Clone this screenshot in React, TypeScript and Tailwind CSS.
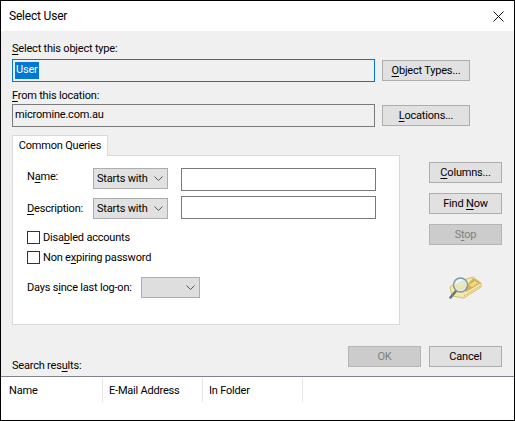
import React from "react";

function Key({ children }: { children: React.ReactNode }) {
  return <span className="underline underline-offset-2">{children}</span>;
}

function Btn({
  children,
  disabled,
  className,
}: {
  children: React.ReactNode;
  disabled?: boolean;
  className: string;
}) {
  return (
    <div
      className={
        (disabled
          ? "bg-[#cccccc] border-[#b5b5b5] text-[#7f7f7f] "
          : "bg-[#e1e1e1] border-[#adadad] text-black ") +
        "h-[21px] border flex items-center justify-center " +
        className
      }
    >
      {children}
    </div>
  );
}

function Chevron() {
  return (
    <svg width="9" height="5" viewBox="0 0 9 5" fill="none" stroke="#555555" strokeWidth="1">
      <path d="M0.5 0.5 L4.5 4.5 L8.5 0.5" />
    </svg>
  );
}

function Combo({ label, className }: { label?: string; className: string }) {
  return (
    <div className={"h-[21px] bg-[#e1e1e1] border border-[#adadad] flex items-center justify-between pl-[3px] pr-[4px] " + className}>
      <span>{label}</span>
      <Chevron />
    </div>
  );
}

function Check({ children }: { children: React.ReactNode }) {
  return (
    <div className="flex items-center h-[13px] gap-[3px]">
      <div className="w-[13px] h-[13px] bg-white border border-[#333333]" />
      <span className="pt-px">{children}</span>
    </div>
  );
}

function FinderIcon() {
  return (
    <svg width="34" height="26" viewBox="0 0 34 26">
      <path d="M1 13 L8 8 L24 3 L32 9 L32 13 L15 24 L3 22 Z" fill="#f5e9a8" stroke="#c9b45c" strokeWidth="0.8" />
      <path d="M15 15 L24 4 L32 9 L17 18 Z" fill="#d2b352" />
      <path d="M20 11 L26 7 L29 9 L23 13 Z" fill="#ecd98a" />
      <path d="M15 22 L31 12" stroke="#b49a45" strokeWidth="0.8" strokeDasharray="1.5 1" />
      <path d="M1.5 23.5 L7 17" stroke="#6f7478" strokeWidth="2.6" strokeLinecap="round" />
      <circle cx="11.5" cy="11" r="7" fill="#dfe9e2" stroke="#7f97a8" strokeWidth="1.4" />
      <path d="M5.5 12 Q11 9 17.5 11.5 A6.5 6.5 0 0 1 5.5 12 Z" fill="#ece5b0" />
      <path d="M7 9 Q9.5 5.5 13.5 6" stroke="#ffffff" strokeWidth="1.1" fill="none" />
    </svg>
  );
}

export default function App() {
  return (
    <div className="w-[515px] h-[421px] border border-black bg-[#f0f0f0] flex flex-col overflow-hidden whitespace-nowrap text-[11px] tracking-[-0.2px] leading-[16px] text-black font-['Roboto',sans-serif]">
      {/* Title bar */}
      <div className="h-[30px] bg-white flex items-center justify-between pl-[8px] pr-[10px] shrink-0">
        <span className="text-[12px]">Select User</span>
        <svg width="11" height="11" viewBox="0 0 11 11" stroke="#111111" strokeWidth="1" fill="none">
          <path d="M0.5 0.5 L10.5 10.5 M10.5 0.5 L0.5 10.5" />
        </svg>
      </div>

      <div className="flex-1 flex flex-col pl-[11px] pr-[12px]">
        {/* Object type */}
        <div className="mt-[10px] h-[16px] leading-[16px]">
          <Key>S</Key>elect this object type:
        </div>
        <div className="mt-[2px] flex items-center">
          <div className="w-[363px] h-[23px] border border-[#0078d7] flex items-center pl-[2px]">
            <span className="bg-[#0078d7] text-white h-[17px] px-[1px] leading-[16px]">User</span>
          </div>
          <Btn className="w-[88px] ml-[7px]">
            <span><Key>O</Key>bject Types...</span>
          </Btn>
        </div>

        {/* Location */}
        <div className="mt-[6px] h-[16px]">
          <Key>F</Key>rom this location:
        </div>
        <div className="flex items-center">
          <div className="w-[363px] h-[23px] border border-[#7a7a7a] flex items-center pl-[2px] pb-px">
            micromine.com.au
          </div>
          <Btn className="w-[88px] ml-[7px]">
            <span><Key>L</Key>ocations...</span>
          </Btn>
        </div>

        {/* Query tabs and the buttons beside them */}
        <div className="mt-[8px] flex">
          <div className="w-[388px] flex flex-col">
            <div className="w-[96px] h-[21px] bg-white border border-b-0 border-[#d9d9d9] flex items-center justify-center z-10 -mb-px">
              Common Queries
            </div>
            <div className="h-[170px] bg-white border border-[#d9d9d9] pl-[14px] pt-[12px] flex flex-col">
              <div className="flex items-start h-[23px]">
                <span className="w-[66px] pt-[1px]">N<Key>a</Key>me:</span>
                <Combo label="Starts with" className="w-[75px]" />
                <div className="ml-[13px] w-[195px] h-[23px] bg-white border border-[#7a7a7a]" />
              </div>
              <div className="mt-[5px] flex items-end h-[23px]">
                <span className="w-[66px] mb-[2px]"><Key>D</Key>escription:</span>
                <Combo label="Starts with" className="w-[75px]" />
                <div className="ml-[13px] w-[195px] h-[23px] bg-white border border-[#7a7a7a]" />
              </div>
              <div className="mt-[12px]">
                <Check>Disa<Key>b</Key>led accounts</Check>
              </div>
              <div className="mt-[7px]">
                <Check>Non e<Key>x</Key>piring password</Check>
              </div>
              <div className="mt-[13px] flex items-center h-[21px]">
                <span className="w-[114px]">Days s<Key>i</Key>nce last log-on:</span>
                <Combo className="w-[59px] !bg-[#dedede]" />
              </div>
            </div>
          </div>

          <div className="ml-[29px] pt-[27px] flex flex-col items-center w-[73px]">
            <Btn className="w-[73px]">
              <span><Key>C</Key>olumns...</span>
            </Btn>
            <Btn className="w-[73px] mt-[10px]">
              <span>Find <Key>N</Key>ow</span>
            </Btn>
            <Btn disabled className="w-[73px] mt-[10px]">
              <span>S<Key>t</Key>op</span>
            </Btn>
            <div className="mt-[29px]">
              <FinderIcon />
            </div>
          </div>
        </div>

        {/* OK and Cancel */}
        <div className="mt-[21px] flex justify-end gap-[8px]">
          <Btn disabled className="w-[73px]">OK</Btn>
          <Btn className="w-[73px]">Cancel</Btn>
        </div>
      </div>

      <div className="pl-[11px] h-[16px] -mt-[11px] mb-[2px] shrink-0">
        Search res<Key>u</Key>lts:
      </div>

      {/* Results list */}
      <div className="h-[44px] shrink-0 bg-white border-t border-[#82828c] flex pt-[1px] items-start">
        {["Name", "E-Mail Address", "In Folder"].map((col) => (
          <div key={col} className="w-[100px] h-[24px] border-r border-[#e5e5e5] flex items-center pl-[6px] pt-px first:w-[102px] first:pl-[8px]">
            {col}
          </div>
        ))}
      </div>
    </div>
  );
}
